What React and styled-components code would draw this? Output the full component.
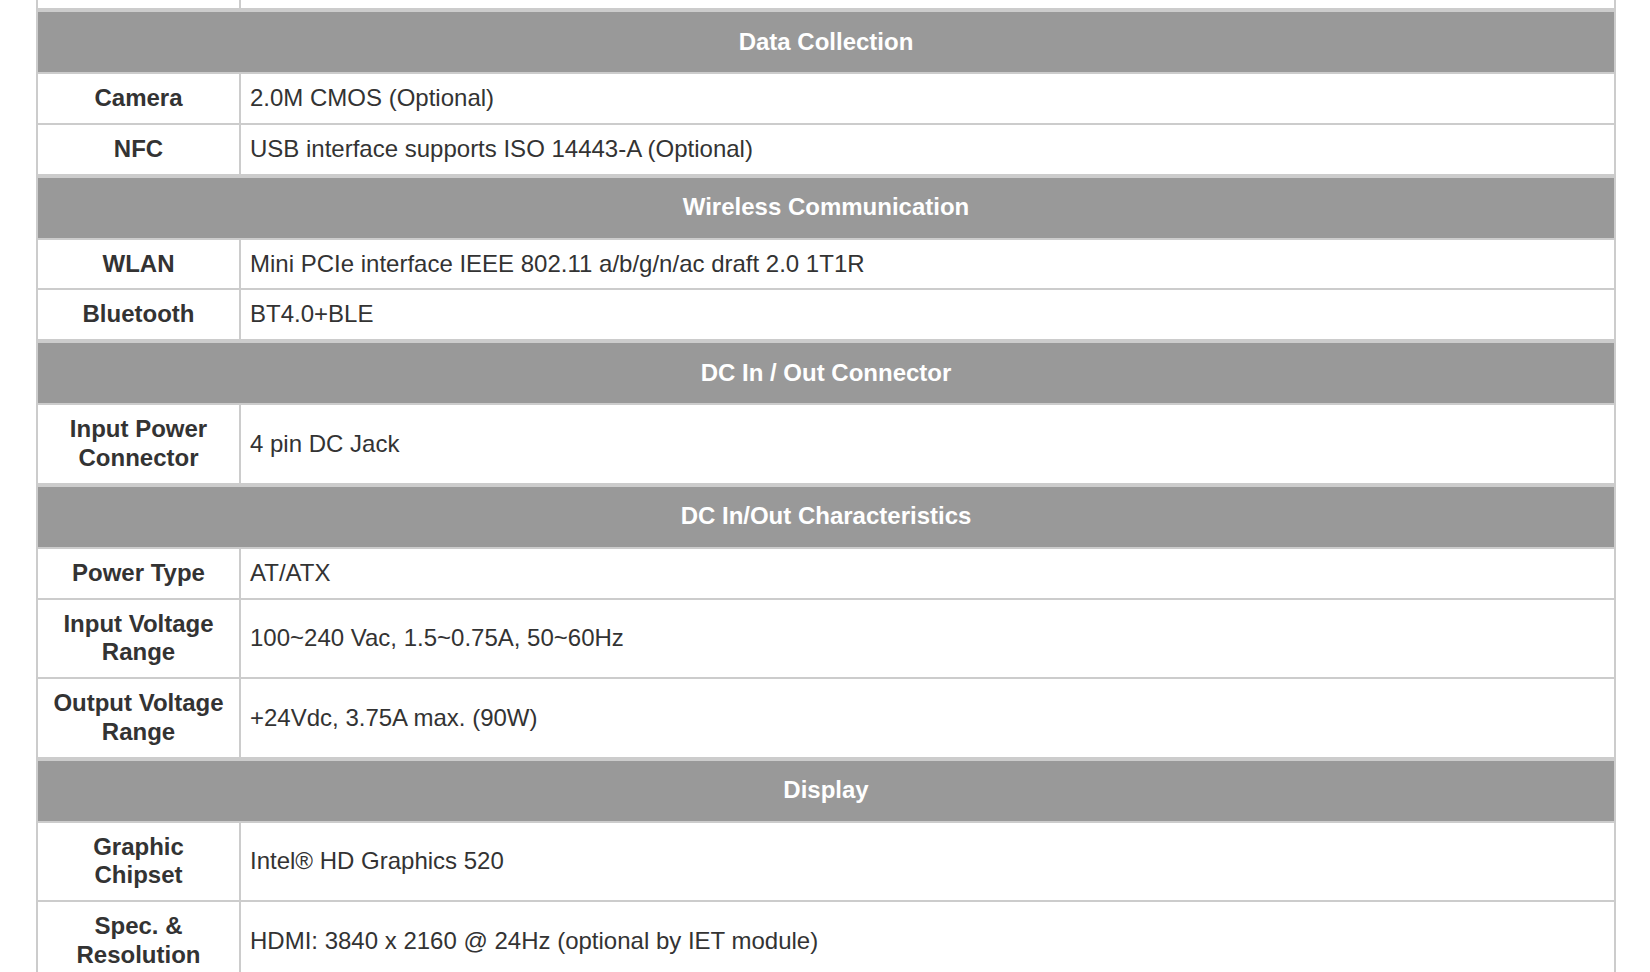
import React from 'react';
import styled, { createGlobalStyle } from 'styled-components';

const sections = [
  {
    title: 'Data Collection',
    rows: [
      { label: 'Camera', value: '2.0M CMOS (Optional)' },
      { label: 'NFC', value: 'USB interface supports ISO 14443-A (Optional)' },
    ],
  },
  {
    title: 'Wireless Communication',
    rows: [
      { label: 'WLAN', value: 'Mini PCIe interface IEEE 802.11 a/b/g/n/ac draft 2.0 1T1R' },
      { label: 'Bluetooth', value: 'BT4.0+BLE' },
    ],
  },
  {
    title: 'DC In / Out Connector',
    rows: [{ label: ['Input Power', 'Connector'], value: '4 pin DC Jack' }],
  },
  {
    title: 'DC In/Out Characteristics',
    rows: [
      { label: 'Power Type', value: 'AT/ATX' },
      { label: ['Input Voltage', 'Range'], value: '100~240 Vac, 1.5~0.75A, 50~60Hz' },
      { label: ['Output Voltage', 'Range'], value: '+24Vdc, 3.75A max. (90W)' },
    ],
  },
  {
    title: 'Display',
    rows: [
      { label: ['Graphic', 'Chipset'], value: 'Intel® HD Graphics 520' },
      { label: ['Spec. &', 'Resolution'], value: 'HDMI: 3840 x 2160 @ 24Hz (optional by IET module)' },
    ],
  },
];

const GlobalStyle = createGlobalStyle`
  html, body {
    margin: 0;
    padding: 0;
    background: #fff;
    overflow: hidden;
  }
  body {
    font-family: "Liberation Sans", Arial, Helvetica, sans-serif;
    color: #333;
  }
`;

const App = () => (
  <>
    <GlobalStyle />
    <Page>
      <Sheet>
        <Row>
          <Label $stub />
          <Value $stub />
        </Row>
        {sections.map((section) => (
          <React.Fragment key={section.title}>
            <Heading>{section.title}</Heading>
            {section.rows.map((row) => (
              <Row key={section.title + row.value}>
                <Label>
                  {Array.isArray(row.label)
                    ? row.label.map((line) => <span key={line}>{line}</span>)
                    : row.label}
                </Label>
                <Value>{row.value}</Value>
              </Row>
            ))}
          </React.Fragment>
        ))}
      </Sheet>
    </Page>
  </>
);

export default App;

const Page = styled.div`
  padding-left: 36px;
`;

const Sheet = styled.div`
  width: 1580px;
  box-sizing: border-box;
  border-left: 2px solid #ccc;
  border-right: 2px solid #ccc;
  font-size: 24px;
  line-height: 28.8px;
`;

const Row = styled.div`
  display: grid;
  grid-template-columns: 203px 1fr;
  border-top: 2px solid #ccc;
  &:first-child {
    border-top: none;
  }
`;

const Heading = styled.div`
  border-top: 4px solid #ccc;
  background: #999;
  color: #fff;
  font-weight: bold;
  text-align: center;
  padding: 15.6px 8px;
`;

const Label = styled.div`
  box-sizing: border-box;
  border-right: 2px solid #ccc;
  padding: ${(p) => (p.$stub ? '0' : '10px 8px')};
  height: ${(p) => (p.$stub ? '8px' : 'auto')};
  font-weight: bold;
  text-align: center;
  display: flex;
  flex-direction: column;
  justify-content: center;
`;

const Value = styled.div`
  padding: ${(p) => (p.$stub ? '0' : '10px 9px')};
  height: ${(p) => (p.$stub ? '8px' : 'auto')};
  display: flex;
  align-items: center;
`;
